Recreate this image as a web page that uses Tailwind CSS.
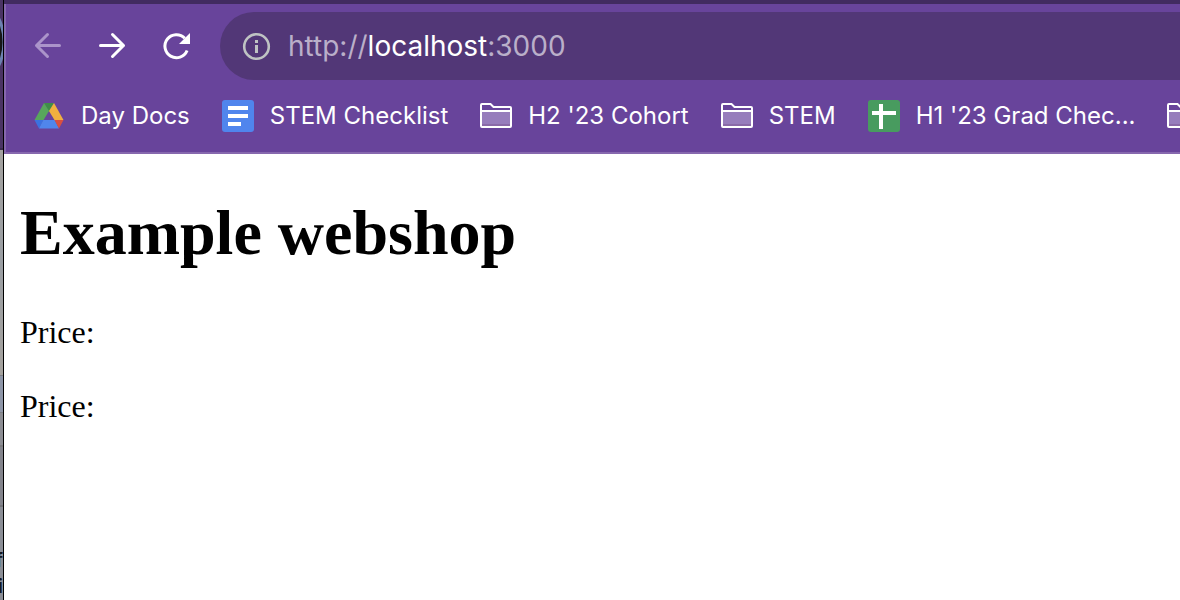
<!DOCTYPE html>
<html lang="en">
<head>
<meta charset="utf-8">
<meta name="viewport" content="width=device-width, initial-scale=1">
<title>Example webshop</title>
<script src="https://cdn.jsdelivr.net/npm/@tailwindcss/browser@4"></script>
</head>
<body class="flex min-h-screen overflow-x-hidden bg-white text-black">

<!-- Sliver of the window behind -->
<aside class="relative w-1 shrink-0 overflow-hidden border-r border-black bg-[#8b8e96]" aria-hidden="true">
  <div class="h-[148px] bg-[#4a3464]">
    <svg class="block h-[70px] w-[3px]" viewBox="0 0 3 70"><circle cx="-49" cy="42" r="53" fill="#171717" stroke="#6c82b0" stroke-width="3"/></svg>
  </div>
  <div class="h-[2px] bg-[#3c2c4e]"></div>
  <div class="h-[225px] bg-linear-to-b from-[#a4a2a0] via-[#9a9ea3] to-[#a5a29e]"></div>
  <div class="h-[38px] border-y border-[#7e7f85] bg-[#8e96a8]"></div>
  <div class="h-[34px] border-b-2 border-[#7b7b7f] bg-[#8c8d93]"></div>
  <div class="h-[60px] border-b-2 border-[#74757b] bg-[#83848c]"></div>
  <div class="mt-10 flex flex-col items-end font-['Inter',sans-serif] text-xl leading-[26px] font-medium text-[#14161f]"><span>f</span><span>i</span></div>
</aside>

<div class="min-w-0 flex-1">
  <header class="border-b-2 border-[#8668ae] border-t-4 border-t-[#412b60] bg-[#68449b] font-['Inter',sans-serif] text-white">
    <div class="border-l-2 border-[#8668ae] pt-2">
      <div class="flex items-center">
        <nav class="flex shrink-0 items-center gap-8 pl-[26px] pr-7" aria-label="History">
          <button type="button" aria-label="Back" disabled class="text-[#ab94ca]">
            <svg class="block size-8" viewBox="0 0 32 32" fill="none" stroke="currentColor" stroke-width="3" stroke-linecap="round" stroke-linejoin="round"><path d="M27.500 15.500H4.500M15.500 4.500l-11 11 11 11"/></svg>
          </button>
          <button type="button" aria-label="Forward">
            <svg class="block size-8" viewBox="0 0 32 32" fill="none" stroke="currentColor" stroke-width="3" stroke-linecap="round" stroke-linejoin="round"><path d="M4.500 15.500h23M16.500 4.500l11 11-11 11"/></svg>
          </button>
          <button type="button" aria-label="Reload">
            <svg class="block size-8" viewBox="0 0 32 32"><path d="M24.800 8.300A11.500 11.500 0 1 0 27.100 20.500" fill="none" stroke="currentColor" stroke-width="3"/><path d="M30 3v11H19z" fill="currentColor"/></svg>
          </button>
        </nav>
        <div class="flex h-[68px] min-w-0 flex-1 items-center gap-4 rounded-l-full bg-[#523777] pl-5">
          <button type="button" aria-label="View site information" class="shrink-0 text-[#bfc3c3]">
            <svg class="block size-8" viewBox="0 0 32 32"><circle cx="16.500" cy="16.500" r="12.300" fill="none" stroke="currentColor" stroke-width="2.600"/><path d="M15 10h3v3h-3zM15 15h3v8h-3z" fill="currentColor"/></svg>
          </button>
          <div role="textbox" contenteditable="true" aria-label="Address and search bar" class="min-w-0 flex-1 text-[28px] leading-8 whitespace-nowrap text-[#baafc9] outline-none">http://<span class="text-white">localhost</span>:3000</div>
        </div>
      </div>
      <nav class="flex h-[72px] items-center gap-8 overflow-hidden pl-[27px] text-2xl leading-8 whitespace-nowrap" aria-label="Bookmarks">
        <a href="#" class="flex shrink-0 items-center gap-4">
          <svg class="block size-8" viewBox="0 0 32 32">
            <path d="M11 3h10l-5 9z" fill="#3f8d49"/>
            <path d="M11 3L1.500 20h9l5.500-9z" fill="#58a65c"/>
            <path d="M21 3l9.500 17h-9L16 11z" fill="#f1b03f"/>
            <path d="M1.500 20h9L6 28.500z" fill="#3b72e0"/>
            <path d="M10.300 20h11.400L26 28.500H6z" fill="#5086ec"/>
            <path d="M21.500 20h9L26 28.500z" fill="#d95040"/>
          </svg>
          <span>Day Docs</span>
        </a>
        <a href="#" class="flex shrink-0 items-center gap-4">
          <svg class="block size-8" viewBox="0 0 32 32"><rect width="32" height="32" rx="3" fill="#5085ed"/><path d="M6 6h20v4H6zM6 14h20v4H6zM6 22h13v4H6z" fill="#fff"/></svg>
          <span>STEM Checklist</span>
        </a>
        <a href="#" class="flex shrink-0 items-center gap-4">
          <svg class="block size-8" viewBox="0 0 32 32"><path d="M2 11h28v14H2z" fill="#977dbc"/><path d="M2 24h28v2H2z" fill="#8a6aa8"/><path d="M1 26V5q0-1 1-1h8.500l3 3H30q1 0 1 1v18q0 1-1 1H2q-1 0-1-1zM1 11h30" fill="none" stroke="#fff" stroke-width="2"/></svg>
          <span>H2 '23 Cohort</span>
        </a>
        <a href="#" class="flex shrink-0 items-center gap-4">
          <svg class="block size-8" viewBox="0 0 32 32"><path d="M2 11h28v14H2z" fill="#977dbc"/><path d="M2 24h28v2H2z" fill="#8a6aa8"/><path d="M1 26V5q0-1 1-1h8.500l3 3H30q1 0 1 1v18q0 1-1 1H2q-1 0-1-1zM1 11h30" fill="none" stroke="#fff" stroke-width="2"/></svg>
          <span>STEM</span>
        </a>
        <a href="#" class="flex shrink-0 items-center gap-4">
          <svg class="block size-8" viewBox="0 0 32 32"><rect width="32" height="32" rx="3" fill="#489b5f"/><path d="M11 4h4v7h13v4H15v14h-4V15H4v-4h7z" fill="#fff"/></svg>
          <span>H1 '23 Grad Chec...</span>
        </a>
        <a href="#" aria-label="Bookmark folder" class="shrink-0">
          <svg class="block size-8" viewBox="0 0 32 32"><path d="M2 11h28v14H2z" fill="#977dbc"/><path d="M2 24h28v2H2z" fill="#8a6aa8"/><path d="M1 26V5q0-1 1-1h8.500l3 3H30q1 0 1 1v18q0 1-1 1H2q-1 0-1-1zM1 11h30" fill="none" stroke="#fff" stroke-width="2"/></svg>
        </a>
      </nav>
    </div>
  </header>

  <main class="px-4 pt-[42px] font-['Liberation_Serif',serif]">
    <h1 class="text-[64px] leading-[74px] font-bold">Example webshop</h1>
    <p class="mt-11 text-[32px] leading-9">Price:</p>
    <p class="mt-[38px] text-[32px] leading-9">Price:</p>
  </main>
</div>
</body>
</html>
